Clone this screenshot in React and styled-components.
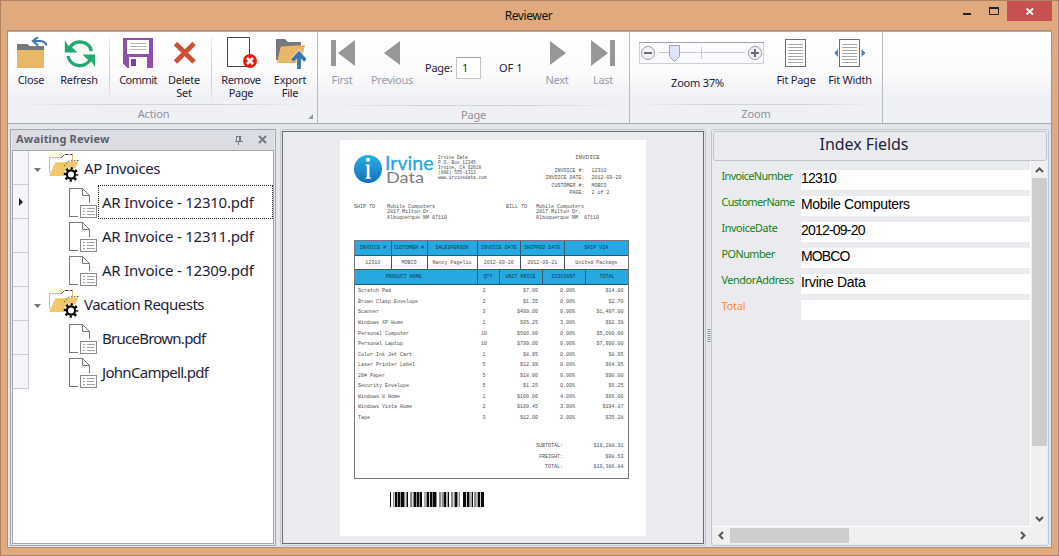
import React from "react";
import styled, { createGlobalStyle } from "styled-components";

const Global = createGlobalStyle`
  *{box-sizing:border-box}
  body{margin:0;overflow:hidden}
`;
const UI = `"Noto Sans","Open Sans",sans-serif`;

const Window = styled.div`
  width:1059px;height:556px;background:#e0aa7e;border:1px solid #ad8363;
  display:flex;flex-direction:column;font-family:${UI};font-size:11px;color:#1e1e3c;
`;
const TitleBar = styled.div`
  height:29px;display:flex;position:relative;justify-content:flex-end;padding-right:6px;
`;
const Title = styled.div`
  position:absolute;left:0;right:2px;top:6px;text-align:center;font-size:12px;line-height:18px;color:#111;letter-spacing:-.4px;
`;
const WinButton = styled.div`
  width:${p => p.$w}px;height:20px;background:${p => p.$close ? "#c75050" : "transparent"};
`;
const Client = styled.div`
  flex:1;margin:0 6px 7px 6px;border:1px solid #b48c70;display:flex;flex-direction:column;background:#e4e6eb;min-height:0;
`;
const Ribbon = styled.div`
  height:93px;display:flex;background:linear-gradient(#fff 0,#fbfbfc 45%,#eff0f4 75%,#f0f1f5 100%);
  border-bottom:1px solid #a5a7b0;border-top:1px solid #b3a8a4;
`;
const Group = styled.div`
  width:${p => p.$w}px;border-right:1px solid #b6b8c2;display:flex;flex-direction:column;position:relative;
`;
const GroupBody = styled.div`
  height:72px;display:flex;padding-left:${p => p.$pad || 0}px;
`;
const Caption = styled.div`
  height:20px;text-align:center;color:#8f909c;line-height:19px;letter-spacing:-.15px;padding-right:${p => p.$inset || 0}px;
  border-top:1px solid transparent;
  background:linear-gradient(90deg,transparent 3%,#d3d5da 30%,#d3d5da 70%,transparent 97%) top/100% 1px no-repeat;
`;
const Corner = styled.div`
  position:absolute;right:4px;bottom:4px;border:solid transparent;border-width:0 0 5px 5px;border-bottom-color:#9496a0;
`;
const Button = styled.div`
  width:${p => p.$w}px;display:flex;flex-direction:column;align-items:center;padding-top:5px;
  color:${p => p.$off ? "#9a9ba9" : "#1e1e3c"};text-align:center;line-height:13px;letter-spacing:${p => p.$ls || -.25}px;
  white-space:pre;
  svg{width:32px;height:34px;display:block;margin-bottom:2px}
`;
const Divider = styled.div`
  width:${p => p.$w}px;display:flex;justify-content:center;padding-top:3px;
  &::after{content:"";width:1px;height:68px;background:linear-gradient(#f4f4f6,#cfd1d7 40%,#cfd1d7 70%,#f0f1f4)}
`;
const PageEdit = styled.div`
  width:114px;display:flex;align-items:center;height:72px;padding-left:7px;line-height:13px;padding-bottom:1px;
`;
const PageLabel = styled.span`width:31px;letter-spacing:-.25px;`;
const PageInput = styled.div`
  width:25px;height:22px;background:#fff;border:1px solid #c3c4cb;border-top-color:#9d9ea8;padding-left:5px;line-height:20px;margin-right:18px;
`;
const ZoomColumn = styled.div`
  width:125px;display:flex;flex-direction:column;align-items:center;padding-top:10px;margin-right:5px;
  svg{display:block}
  span{margin:11px 8px 0 0;line-height:16px;letter-spacing:-.2px}
`;
const Workspace = styled.div`
  flex:1;display:flex;min-height:0;
`;
const TreePanel = styled.div`
  width:266px;margin:5px 0 1px 2px;border:1px solid #a3a5af;display:flex;flex-direction:column;background:#e8e9ee;
  padding:0 1px 1px 1px;
`;
const PanelHead = styled.div`
  height:20px;background:#dcdde2;display:flex;align-items:center;padding-left:4px;font-weight:700;color:#5c5e6c;letter-spacing:.18px;
  svg{display:block}
  span{flex:1;line-height:18px;margin-top:-2px}
`;
const Tree = styled.div`
  flex:1;background:#fff;border:1px solid #a3a5af;
`;
const Row = styled.div`
  height:34px;display:flex;font-size:15px;line-height:33px;color:#1e1e3c;
`;
const Indicator = styled.div`
  width:16px;height:34px;background:#f5f6f9;border-right:1px solid #cbccd4;border-bottom:1px solid #cbccd4;
  display:flex;align-items:center;padding-left:6px;
`;
const Expander = styled.div`
  width:20px;display:flex;align-items:center;padding:4px 0 0 5px;
`;
const Branch = styled.div`
  flex:1;display:flex;padding-left:${p => p.$leaf ? 39 : 0}px;
  svg{display:block;flex:none}
`;
const Label = styled.div`
  flex:1;padding-left:${p => p.$folder ? 1 : 3}px;letter-spacing:${p => p.$ls || -.22}px;white-space:nowrap;height:34px;
  border:1px dotted ${p => p.$focus ? "#222" : "transparent"};line-height:33px;
`;
const Viewer = styled.div`
  width:426px;margin:5px 0 1px 4px;border:1px solid #c3c5cc;border-radius:3px;padding:1px;display:flex;
`;
const Canvas = styled.div`
  flex:1;background:#eaebef;border:1px solid #6a6b72;padding:8px 0 0 57px;
`;
const Splitter = styled.div`
  width:5px;display:flex;align-items:center;justify-content:center;
`;
const FieldsPanel = styled.div`
  flex:1;margin:5px 2px 1px 0;border:1px solid #c3c5cf;border-radius:3px;background:#eaebef;padding:1px;display:flex;flex-direction:column;min-width:0;
`;
const FieldsHead = styled.div`
  height:30px;border:1px solid #bfc1cc;border-radius:3px;text-align:center;font-size:16px;line-height:25px;color:#1e1e3c;
  padding-right:32px;letter-spacing:-.05px;
`;
const FieldsBody = styled.div`flex:1;display:flex;min-height:0;`;
const FieldsList = styled.div`
  flex:1;display:flex;flex-direction:column;gap:6px;padding-top:9px;border-right:1px solid #fff;border-bottom:1px solid #fff;
`;
const Field = styled.div`
  display:flex;height:20px;
`;
const FieldName = styled.div`
  width:88px;padding-left:8.5px;line-height:14px;margin-top:-1px;font-size:10.8px;color:${p => p.$todo ? "#ff8c1a" : "#128012"};letter-spacing:${p => p.$ls}px;white-space:nowrap;
`;
const FieldValue = styled.div`
  flex:1;background:#fff;font:14px/17px "Liberation Sans",Arial,sans-serif;color:#000;letter-spacing:${p => p.$ls}px;white-space:nowrap;
`;
const VBar = styled.div`
  width:16px;background:#f0f0f0;display:flex;flex-direction:column;align-items:center;
  svg{display:block}
`;
const VThumb = styled.div`width:15px;height:268px;background:#cdcdcd;`;
const HBar = styled.div`
  height:17px;background:#f0f0f0;display:flex;padding-bottom:1px;align-items:center;
  svg{display:block}
`;
const HThumb = styled.div`width:119px;height:15px;background:#cdcdcd;margin-right:auto;`;

/* Invoice page shown in the viewer */
const Sheet = styled.div`
  width:306px;height:396px;background:#fff;padding:14px 17px 0 14px;font:5px/5px "Liberation Mono","Courier New",monospace;color:#505050;white-space:pre;
`;
const SheetTop = styled.div`display:flex;height:51px;`;
const Logo = styled.svg`width:80px;height:34px;display:block;flex:none;overflow:visible;`;
const Address = styled.div`width:103px;padding:.6px 0 0 4px;font-size:4.5px;line-height:5px;`;
const Facts = styled.div`flex:1;padding-top:1px;font-size:5px;`;
const FactsTitle = styled.div`padding-left:38px;height:13px;font-size:5.9px;`;
const Fact = styled.div`
  display:grid;grid-template-columns:47.5px 1fr;column-gap:7px;height:7.35px;line-height:7.35px;
  div:first-child{text-align:right}
`;
const Parties = styled.div`display:flex;height:35px;line-height:5.25px;`;
const PartyLabel = styled.div`width:${p => p.$w}px;text-align:${p => p.$right ? "right" : "left"};`;
const Party = styled.div`width:${p => p.$w}px;padding-left:${p => p.$pad || 0}px;`;
const Table = styled.div`border:1px solid #777;height:239px;display:flex;flex-direction:column;`;
const Line = styled.div`
  display:grid;grid-template-columns:${p => p.$cols};height:14.5px;line-height:14px;text-align:center;
  background:${p => p.$head ? "#25a9e0" : "#fff"};color:${p => p.$head ? "#123a54" : "#505050"};
  border-bottom:1px solid ${p => p.$head ? "#275a74" : "#555"};
  div+div{border-left:1px solid #3c5665}
  div:first-child{padding-right:${p => p.$shift || 0}px}
`;
const Items = styled.div`padding-top:1.9px;flex:1;`;
const Item = styled.div`
  display:grid;grid-template-columns:121px 16px 46px 37px 48.5px;height:10.56px;line-height:10.56px;text-align:right;
  div:first-child{text-align:left;padding-left:3px}
  div:nth-child(2){text-align:center}
`;
const Totals = styled.div`height:34px;margin-bottom:3px;`;
const TotalLine = styled.div`
  display:grid;grid-template-columns:208px 60.5px;height:10.56px;line-height:10.56px;text-align:right;
`;
const Barcode = styled.svg`display:block;margin:13px 0 0 36px;`;

const CloseIcon = () => <svg viewBox="0 0 32 34"><path d="M2 7h10l3 2h14v4H2z" fill="#77787b" /><path d="M2 13h27v18H2z" fill="#e9b765" /><path d="M23 0l-5 4 5 4.500M19 4h6q5 .2 7 4.500" fill="none" stroke="#3d77b5" strokeWidth="2.200" /></svg>;
const RefreshIcon = () => <svg viewBox="0 0 32 34"><g fill="none" stroke="#1fab70" strokeWidth="3.400"><path d="M6.500 11A12 12 0 0 1 28.500 14" /><path d="M27.500 22A12 12 0 0 1 5 19" /></g><path d="M1.800 3v12.500h12.700L9.500 10.500 5 8.500zM32 30V17.500H19.500l5 5 4.500 2.500z" fill="#1fab70" /></svg>;
const SaveIcon = () => <svg viewBox="0 0 32 34" shapeRendering="crispEdges"><path d="M1 1h30v30H5l-4-4z" fill="#8e4fad" /><path d="M5 3h22v14H5zM7 20h18v11H7z" fill="#fff" /><path d="M8 6.500h16M8 9.500h16M8 12.500h16" stroke="#b8b8b8" /><path d="M9 22h5v7H9z" fill="#7b3f9c" /></svg>;
const DeleteIcon = () => <svg viewBox="0 0 32 34"><path d="M7.500 6.500L26 25M26 6.500L7.500 25" stroke="#cb4f33" strokeWidth="4.600" /></svg>;
const RemoveIcon = () => <svg viewBox="0 0 32 34"><path d="M2.500.5h22v29h-22z" fill="#fff" stroke="#444" /><circle cx="25" cy="24" r="7" fill="#de1f0b" /><path d="M22 21l6 6M28 21l-6 6" stroke="#fff" strokeWidth="2.600" /></svg>;
const ExportIcon = () => <svg viewBox="0 0 32 34"><path d="M2 2h9l3 3h13v5H7L4 23H2z" fill="#77787b" /><path d="M7 9.500L31 8l-4 18H3z" fill="#e9b765" /><path d="M25 32V17M18.500 23l6.500-7 6.500 7" fill="none" stroke="#fff" strokeWidth="5.500" opacity=".45" /><path d="M25 32V17M18.500 23.500l6.500-7 6.500 7" fill="none" stroke="#3d77b5" strokeWidth="3.800" /></svg>;
const NavIcon = ({ d }) => <svg viewBox="0 0 32 34"><path d={d} fill="#979797" /></svg>;
const FitIcon = ({ wide }) => <svg viewBox="0 0 32 34"><path d="M5.500 2.500h20v27h-20z" fill="#fff" stroke="#707070" shapeRendering="crispEdges" /><path d="M8 7.500h15M8 10.500h15M8 13.500h15M8 16.500h15M8 19.500h15M8 22.500h15M8 25.500h15" stroke="#a8a8a8" shapeRendering="crispEdges" />{wide && <path d="M4 12v8L.3 16zM27.500 12v8l4-4z" fill="#4a84bd" />}</svg>;

const FolderIcon = () => <svg width="33" height="34"><path d="M.5 22V6.500h12l3-3h8V11" fill="none" stroke="#e9bf5e" /><path d="M12.500 6.500l3-3h8" fill="none" stroke="#3a3a30" strokeDasharray="3 2" /><path d="M0 25L6.500 11.500 29.500 10.500 22.500 25z" fill="#efc868" /><path d="M15 15l5-5 9.500-.5" fill="none" stroke="#59502f" strokeDasharray="1.500 1.500" /><circle cx="22" cy="23.500" r="7.500" fill="#fff" opacity=".5" /><circle cx="22" cy="23.500" r="4.100" fill="#fff" stroke="#0b0b0b" strokeWidth="2.200" /><circle cx="22" cy="23.500" r="6.100" fill="none" stroke="#0b0b0b" strokeWidth="2.400" strokeDasharray="2.300 2.491" strokeDashoffset="1.150" /></svg>;
const FileIcon = () => <svg width="30" height="34" shapeRendering="crispEdges"><path d="M10 31.500H1.500v-28h13l7 7V18" fill="none" stroke="#7a7a7a" /><path d="M14.500 3.500v7h7z" fill="none" stroke="#7a7a7a" shapeRendering="auto" /><path d="M12.500 20.500h16v12h-16z" fill="#fff" stroke="#8a8a8a" /><path d="M14.500 23.500h2M14.500 26.500h2M14.500 29.500h2M18.500 23.500h8M18.500 26.500h7M18.500 29.500h8" stroke="#a5a5a5" /></svg>;

const TREE = [
  { text: "AP Invoices", ls: -.38, folder: true },
  { text: "AR Invoice - 12310.pdf", focus: true },
  { text: "AR Invoice - 12311.pdf" },
  { text: "AR Invoice - 12309.pdf" },
  { text: "Vacation Requests", ls: -.52, folder: true },
  { text: "BruceBrown.pdf", ls: -.75 },
  { text: "JohnCampell.pdf", ls: -.7 },
];
const FIELDS = [
  ["InvoiceNumber", "12310", -.58, -.8], ["CustomerName", "Mobile Computers", -.6, -.3], ["InvoiceDate", "2012-09-20", -.4, -.8],
  ["PONumber", "MOBCO", -.5, -.9], ["VendorAddress", "Irvine Data", -.4, -.3], ["Total", "", -.1, 0],
];
const ITEMS = [
  ["Scratch Pad", "2", "$7.00", "0.00%", "$14.00"], ["Brown Clasp Envelope", "2", "$1.35", "0.00%", "$2.70"],
  ["Scanner", "3", "$499.00", "0.00%", "$1,497.00"], ["Windows XP Home", "1", "$95.25", "3.00%", "$92.39"],
  ["Personal Computer", "10", "$500.00", "0.00%", "$5,000.00"], ["Personal Laptop", "10", "$799.00", "0.00%", "$7,990.00"],
  ["Color Ink Jet Cart", "1", "$8.95", "0.00%", "$8.95"], ["Laser Printer Label", "5", "$12.99", "0.00%", "$64.95"],
  ["20# Paper", "5", "$18.00", "0.00%", "$90.00"], ["Security Envelope", "5", "$1.25", "0.00%", "$6.25"],
  ["Windows 8 Home", "1", "$100.00", "4.00%", "$96.00"], ["Windows Vista Home", "2", "$100.45", "3.00%", "$194.87"],
  ["Tape", "3", "$12.00", "2.00%", "$35.28"],
];
const BAR_GROUPS = [[3, 15], [20, 12], [34, 13], [49, 10], [61, 9], [73, 10], [84, 10]];
const BARS = [[0, 1], [5, 2], [8, 2], [11, 3], [17, 1], [24, 2], [27, 2], [30, 2], [37, 2], [40, 2], [43, 3], [54, 2], [58, 1], [65, 2], [73, 3], [77, 2], [82, 1], [88, 2], [91, 3]];
const BAR_GAPS = [4, 15, 22, 34.7, 39, 51, 56.5, 63, 68, 76, 80.5, 86.5, 90];
const HEAD1 = "35.5px 36px 50px 43.5px 43.5px 1fr";
const HEAD2 = "121.5px 22px 43px 43.5px 1fr";

const Cells = ({ of }) => of.map((t, i) => <div key={i}>{t}</div>);

function Invoice() {
  return (
    <Sheet>
      <SheetTop>
        <Logo viewBox="0 0 80 34">
          <defs><linearGradient id="disc" x2="0" y2="1"><stop stopColor="#2bb0e4" /><stop offset="1" stopColor="#1270b8" /></linearGradient></defs>
          <circle cx="14" cy="15" r="14" fill="url(#disc)" />
          <circle cx="14" cy="5.800" r="2.100" fill="#fff" /><path d="M11.500 10.500h4v13h1.500v1.200h-5.500v-1.200h1.300v-12h-1.300z" fill="#fff" />
          <text x="31" y="16" fontSize="19.500" fill="#27a5dc" stroke="#27a5dc" strokeWidth=".3" textLength="48.500" lengthAdjust="spacingAndGlyphs" fontFamily="Lato">Irvine</text>
          <text x="32" y="29" fontSize="16" fill="#808080" textLength="38" lengthAdjust="spacingAndGlyphs" fontFamily="Lato">Data</text>
        </Logo>
        <Address>{"Irvine Data\nP.O. Box 12345\nIrvine, CA 92618\n(888) 555-1313\nwww.irvinedata.com"}</Address>
        <Facts>
          <FactsTitle>INVOICE</FactsTitle>
          <Fact><Cells of={["INVOICE #:", "12310"]} /></Fact>
          <Fact><Cells of={["INVOICE DATE:", "2012-09-20"]} /></Fact>
          <Fact><Cells of={["CUSTOMER #:", "MOBCO"]} /></Fact>
          <Fact><Cells of={["PAGE:", "2 of 2"]} /></Fact>
        </Facts>
      </SheetTop>
      <Parties>
        <PartyLabel $w={33}>SHIP TO</PartyLabel>
        <Party $w={119}>{"Mobile Computers\n2817 Milton Dr.\nAlbuquerque NM 87110"}</Party>
        <PartyLabel $w={21} $right>BILL TO</PartyLabel>
        <Party $w={90} $pad={9}>{"Mobile Computers\n2817 Milton Dr.\nAlbuquerque NM  87110"}</Party>
      </Parties>
      <Table>
        <Line $head $cols={HEAD1}><Cells of={["INVOICE #", "CUSTOMER #", "SALESPERSON", "INVOICE DATE", "SHIPPED DATE", "SHIP VIA"]} /></Line>
        <Line $cols={HEAD1}><Cells of={["12310", "MOBCO", "Nancy Pagelio", "2012-09-20", "2012-09-21", "United Package"]} /></Line>
        <Line $head $shift={24} $cols={HEAD2}><Cells of={["PRODUCT NAME", "QTY", "UNIT PRICE", "DISCOUNT", "TOTAL"]} /></Line>
        <Items>{ITEMS.map(r => <Item key={r[0]}><Cells of={r} /></Item>)}</Items>
        <Totals>
          <TotalLine><Cells of={["SUBTOTAL:", "$19,288.31"]} /></TotalLine>
          <TotalLine><Cells of={["FREIGHT:", "$98.53"]} /></TotalLine>
          <TotalLine><Cells of={["TOTAL:", "$19,386.84"]} /></TotalLine>
        </Totals>
      </Table>
      <Barcode width="95" height="15">
        {BAR_GROUPS.map(([x, w]) => <rect key={x} x={x} width={w} height="15" fill="#8c8c8c" />)}
        {BAR_GAPS.map(x => <rect key={x} x={x} width=".8" height="15" fill="#e4e4e4" />)}
        {BARS.map(([x, w]) => <rect key={x} x={x} width={w} height="15" fill="#0a0a0a" />)}
      </Barcode>
    </Sheet>
  );
}

export default function App() {
  return (
    <Window>
      <Global />
      <TitleBar>
        <Title>Reviewer</Title>
        <WinButton $w={26}><svg width="26" height="20"><path d="M9 12h8v2H9z" fill="#222" /></svg></WinButton>
        <WinButton $w={27}><svg width="27" height="20"><path d="M9.500 6.500h9v7h-9z" fill="none" stroke="#222" /><path d="M9 6h10v2H9z" fill="#222" /></svg></WinButton>
        <WinButton $w={45} $close><svg width="45" height="20"><path d="M19.500 7.500l6.500 6M26 7.500l-6.500 6" stroke="#fff" strokeWidth="1.800" /></svg></WinButton>
      </TitleBar>
      <Client>
        <Ribbon>
          <Group $w={310}>
            <GroupBody>
              <Button $w={46}><CloseIcon />Close</Button>
              <Button $w={50}><RefreshIcon />Refresh</Button>
              <Divider $w={11} />
              <Button $w={46} $ls={-.55}><SaveIcon />Commit</Button>
              <Button $w={46}><DeleteIcon />{"Delete\nSet"}</Button>
              <Divider $w={9} />
              <Button $w={50} $ls={-.35}><RemoveIcon />{"Remove\nPage"}</Button>
              <Button $w={48}><ExportIcon />{"Export\nFile"}</Button>
            </GroupBody>
            <Caption $inset={18}>Action</Caption>
            <Corner />
          </Group>
          <Group $w={312}>
            <GroupBody>
              <Button $w={48} $off><NavIcon d="M5 3h5v26H5zM29 3v26L12 16z" />First</Button>
              <Button $w={52} $off><NavIcon d="M24 4v24L8 16z" />Previous</Button>
              <PageEdit><PageLabel>Page:</PageLabel><PageInput>1</PageInput><span>OF 1</span></PageEdit>
              <Button $w={50} $off><NavIcon d="M9 4v24l16-12z" />Next</Button>
              <Button $w={42} $off><NavIcon d="M4 3v26l17-13zM23 3h5v26h-5z" />Last</Button>
            </GroupBody>
            <Caption>Page</Caption>
          </Group>
          <Group $w={253}>
            <GroupBody $pad={9}>
              <ZoomColumn>
                <svg width="125" height="22">
                  <path d="M.5.5h124v21H.5z" fill="#fbfbfd" stroke="#cfd0d7" /><path d="M0 .5h125" stroke="#a3a4ae" />
                  <path d="M19 10.500h87" stroke="#c8c9d2" /><path d="M62.500 5v12" stroke="#c8c9d2" />
                  <g fill="#f4f4f6" stroke="#9c9da8"><circle cx="9" cy="11" r="6.500" /><circle cx="116" cy="11" r="6.500" /></g>
                  <path d="M5 11h8M112 11h8M116 7v8" stroke="#6d6e7a" strokeWidth="2" />
                  <path d="M30.500 3.500h10v11l-5 5-5-5z" fill="#dfe5fb" stroke="#a0a2ae" />
                </svg>
                <span>Zoom 37%</span>
              </ZoomColumn>
              <Button $w={54}><FitIcon />Fit Page</Button>
              <Button $w={54}><FitIcon wide />Fit Width</Button>
            </GroupBody>
            <Caption>Zoom</Caption>
          </Group>
        </Ribbon>
        <Workspace>
          <TreePanel>
            <PanelHead>
              <span>Awaiting Review</span>
              <svg width="23" height="20"><path d="M3.500 6v5M2 11.500h8M5.500 11v4M3.500 6.500h5" stroke="#777985" fill="none" /><path d="M6 6h2v5H6z" fill="#777985" /></svg>
              <svg width="18" height="20"><path d="M3 6l7 7M10 6l-7 7" stroke="#777985" strokeWidth="2" /></svg>
            </PanelHead>
            <Tree>
              {TREE.map(n => (
                <Row key={n.text}>
                  <Indicator>{n.focus && <svg width="5" height="8"><path d="M0 0l4 4-4 4z" fill="#1e1e3c" /></svg>}</Indicator>
                  {n.folder && <Expander><svg width="8" height="5"><path d="M0 0h7L3.500 4z" fill="#777985" /></svg></Expander>}
                  <Branch $leaf={!n.folder}>
                    {n.folder ? <FolderIcon /> : <FileIcon />}
                    <Label $focus={n.focus} $folder={n.folder} $ls={n.ls}>{n.text}</Label>
                  </Branch>
                </Row>
              ))}
            </Tree>
          </TreePanel>
          <Viewer><Canvas><Invoice /></Canvas></Viewer>
          <Splitter><svg width="4" height="14"><path d="M2 0v14" stroke="#8f919b" strokeWidth="3" strokeDasharray="1 1" /></svg></Splitter>
          <FieldsPanel>
            <FieldsHead>Index Fields</FieldsHead>
            <FieldsBody>
              <FieldsList>
                {FIELDS.map(([n, v, nameSpacing, valueSpacing]) => (
                  <Field key={n}><FieldName $ls={nameSpacing} $todo={n === "Total"}>{n}</FieldName><FieldValue $ls={valueSpacing}>{v}</FieldValue></Field>
                ))}
              </FieldsList>
              <VBar>
                <svg width="15" height="17"><path d="M4 11l3.500-3.500L11 11" fill="none" stroke="#555" strokeWidth="2" /></svg>
                <VThumb />
                <svg width="15" height="17" style={{ marginTop: "auto" }}><path d="M4 7l3.500 3.500L11 7" fill="none" stroke="#555" strokeWidth="2" /></svg>
              </VBar>
            </FieldsBody>
            <HBar>
              <svg width="17" height="15"><path d="M10 4L6.500 7.500 10 11" fill="none" stroke="#555" strokeWidth="2" /></svg>
              <HThumb />
              <svg width="33" height="15"><path d="M7 4l3.500 3.500L7 11" fill="none" stroke="#555" strokeWidth="2" /></svg>
            </HBar>
          </FieldsPanel>
        </Workspace>
      </Client>
    </Window>
  );
}
